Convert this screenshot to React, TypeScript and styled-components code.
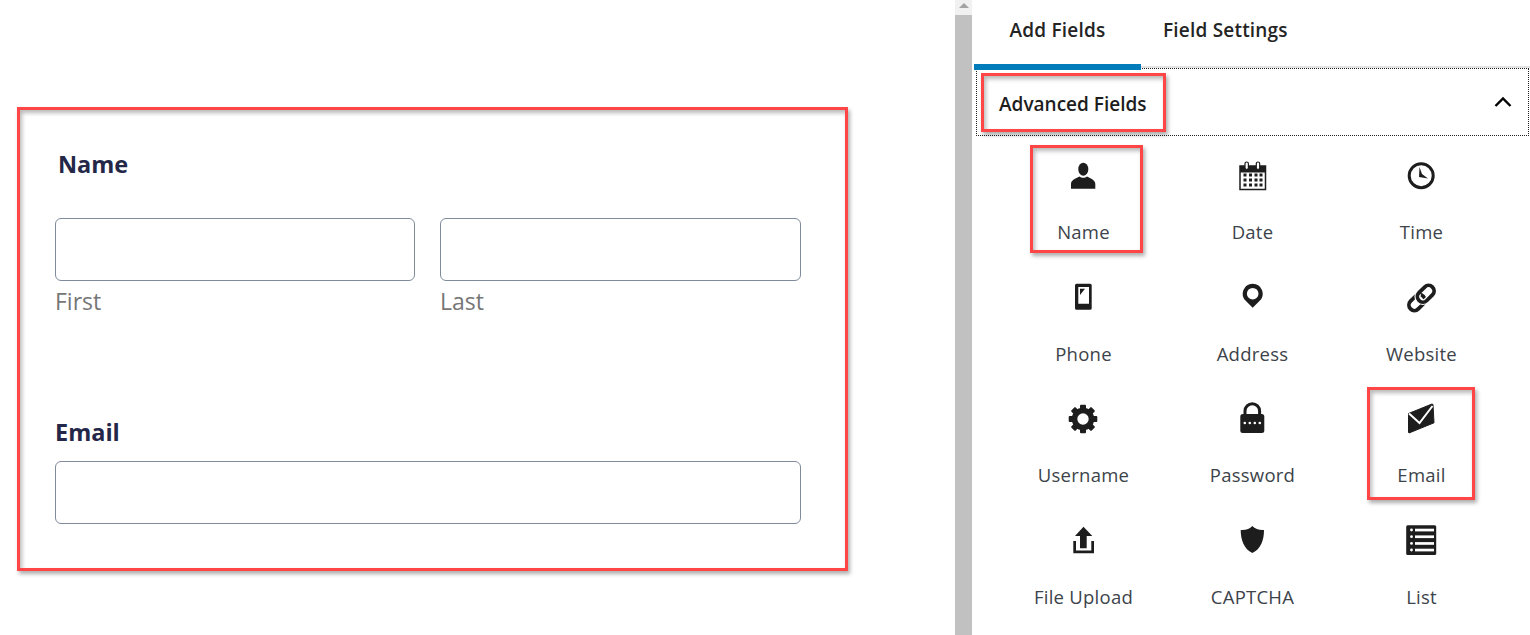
import React from "react";
import styled, { createGlobalStyle } from "styled-components";

const Global = createGlobalStyle`
  html, body { margin: 0; padding: 0; background: #fff; }
  body { font-family: "Open Sans", "Noto Sans", sans-serif; overflow: hidden; }
  * { box-sizing: border-box; }
`;

const Page = styled.div`
  display: flex;
  width: 1530px;
  height: 635px;
  overflow: hidden;
`;

const Canvas = styled.main`
  width: 955px;
  flex: none;
  padding: 107px 0 0 17px;
`;

const annotated = `
  border: 3px solid #ff4545;
  box-shadow: 2px 3px 4px rgba(0, 0, 0, 0.32), inset 2px 3px 4px rgba(0, 0, 0, 0.28);
`;

const FormCard = styled.section`
  ${annotated}
  width: 831px;
  height: 464px;
  padding: 38px 44px 0 35px;
`;

const FieldLabel = styled.div<{ $indent?: number; $gap: number }>`
  font-size: 23.5px;
  line-height: 32px;
  font-weight: 700;
  color: #242748;
  padding-left: ${(p) => p.$indent ?? 0}px;
  margin-bottom: ${(p) => p.$gap}px;
`;

const NameRow = styled.div`
  display: grid;
  grid-template-columns: 360px 361px;
  column-gap: 25px;
  margin-bottom: 99px;
`;

const TextInput = styled.input`
  display: block;
  width: 100%;
  height: 63px;
  border: 1px solid #7f8b9a;
  border-radius: 6px;
  background: #fff;
  outline: none;
`;

const SubLabel = styled.div`
  margin-top: 5px;
  margin-bottom: 1px;
  font-size: 23px;
  line-height: 30px;
  color: #767676;
`;

const Scrollbar = styled.div`
  width: 17px;
  flex: none;
  display: flex;
  flex-direction: column;
  background: #c1c1c1;
`;

const ScrollButton = styled.div`
  height: 15px;
  background: #f1f1f1;
  display: flex;
  align-items: flex-start;
  justify-content: center;
  padding-top: 3px;
  &::before {
    content: "";
    border-left: 5px solid transparent;
    border-right: 5px solid transparent;
    border-bottom: 5px solid #a3a3a3;
  }
`;

const Panel = styled.aside`
  flex: 1;
  min-width: 0;
  padding-left: 2px;
`;

const TabBar = styled.div`
  display: flex;
  height: 68px;
  border-bottom: 2px solid #e4e4e4;
`;

const Tab = styled.div<{ $active?: boolean }>`
  position: relative;
  z-index: 1;
  height: 70px;
  padding: 15px 0 0;
  font-size: 19px;
  line-height: 30px;
  font-weight: 600;
  color: #242424;
  text-align: center;
  letter-spacing: 0.2px;
  width: ${(p) => (p.$active ? "167px" : "auto")};
  margin-left: ${(p) => (p.$active ? "0" : "22px")};
  border-bottom: ${(p) => (p.$active ? "6px solid #007cba" : "none")};
`;

const Section = styled.section`
  margin: 0 0 0 2px;
  width: 553px;
`;

const SectionHeader = styled.header`
  height: 68px;
  border: 1px dotted #222;
  padding: 0 16px 0 22px;
  display: flex;
  align-items: center;
  justify-content: space-between;
`;

const SectionTitle = styled.h2`
  position: relative;
  margin: 4px 0 0;
  font-size: 19px;
  line-height: 26px;
  font-weight: 600;
  color: #1d1d1d;
`;

const Highlight = styled.div<{ $l: number; $t: number; $w: number; $h: number }>`
  ${annotated}
  position: absolute;
  left: ${(p) => p.$l}px;
  top: ${(p) => p.$t}px;
  width: ${(p) => p.$w}px;
  height: ${(p) => p.$h}px;
  pointer-events: none;
`;

const FieldGrid = styled.div`
  display: grid;
  grid-template-columns: repeat(3, 169px);
  grid-auto-rows: 84px;
  row-gap: 37.67px;
  padding: 24px 0 0 22.5px;
`;

const FieldCell = styled.div`
  position: relative;
  display: flex;
  flex-direction: column;
  align-items: center;
`;

const IconSlot = styled.svg`
  display: block;
  width: 32px;
  height: 32px;
  margin-bottom: 28px;
  overflow: visible;
  color: #1d1d1d;
`;

const CellLabel = styled.span`
  font-size: 18.5px;
  line-height: 24px;
  letter-spacing: 0.25px;
  margin-left: 1px;
  color: #3c434a;
  white-space: nowrap;
`;

const Person = () => (
  <g fill="currentColor">
    <ellipse cx="16.300" cy="9.200" rx="5" ry="6.500" />
    <path d="M4 28.700V24c0-4 4.500-5.500 8.500-7.500 2 1.700 5.500 1.700 7.500 0 4 2 8.300 3.500 8.300 7.500v4.700z" />
  </g>
);

const Calendar = () => (
  <g>
    <rect x="4" y="6" width="25.500" height="23.500" fill="#fff" stroke="currentColor" strokeWidth="1.500" />
    <rect x="4" y="6" width="25.500" height="6.500" fill="currentColor" />
    <rect x="9" y="2" width="3.400" height="7.500" rx="1.700" fill="#fff" stroke="currentColor" strokeWidth="1.200" />
    <rect x="20.300" y="2" width="3.400" height="7.500" rx="1.700" fill="#fff" stroke="currentColor" strokeWidth="1.200" />
    {[15, 20, 25].map((y) =>
      [9, 14.5, 20, 25].map((x) => (
        <rect key={`${x}-${y}`} x={x - 1.5} y={y - 1.5} width="3" height="3" fill="currentColor" />
      ))
    )}
  </g>
);

const Clock = () => (
  <g>
    <circle cx="16.200" cy="15.700" r="12" fill="none" stroke="currentColor" strokeWidth="3" />
    <path d="M14.500 7l2.500 7 6 4.500-9-1.500z" fill="currentColor" />
  </g>
);

const Phone = () => (
  <path
    fillRule="evenodd"
    fill="currentColor"
    d="M9.500 1.700h13.700a1.500 1.500 0 0 1 1.500 1.500v23a1.500 1.500 0 0 1-1.500 1.500H9.500A1.500 1.500 0 0 1 8 26.200v-23a1.500 1.500 0 0 1 1.500-1.500zM11.300 5v16.700H22V5zM13 6.700h5L13 13z"
  />
);

const Pin = () => (
  <path
    fillRule="evenodd"
    fill="currentColor"
    d="M16.700 1.700a10 10 0 0 1 6.500 17.600l-6.500 6.400-6.500-6.400a10 10 0 0 1 6.500-17.600zm0 4.200a5.800 5.800 0 1 0 0 11.600 5.800 5.800 0 0 0 0-11.600z"
  />
);

const LinkIcon = () => (
  <g transform="rotate(-45 16.500 16)" fill="none" strokeWidth="3.800">
    <rect x="1" y="10.500" width="18" height="11" rx="5.500" stroke="currentColor" />
    <rect x="13" y="10.500" width="19" height="11" rx="5.500" stroke="#fff" strokeWidth="6" strokeDasharray="0 14 40 100" />
    <rect x="13" y="10.500" width="19" height="11" rx="5.500" stroke="currentColor" />
  </g>
);

const Gear = () => (
  <g fill="currentColor">
    {[0, 45, 90, 135].map((a) => (
      <rect key={a} x="13" y="1.700" width="6" height="28.600" rx="1" transform={`rotate(${a} 16 16)`} />
    ))}
    <circle cx="16" cy="16" r="8.500" fill="none" stroke="currentColor" strokeWidth="5.500" />
    <circle cx="16" cy="16" r="5.700" fill="#fff" />
  </g>
);

const Lock = () => (
  <g>
    <path d="M9 13V8a7.300 7.300 0 0 1 14.600 0v5" fill="none" stroke="currentColor" strokeWidth="3" />
    <rect x="4.300" y="11" width="24" height="19" rx="2.500" fill="currentColor" />
    {[8.8, 13.8, 18.8, 23.8].map((x) => (
      <circle key={x} cx={x} cy="20" r="1.300" fill="#fff" />
    ))}
  </g>
);

const Envelope = () => (
  <g>
    <path d="M3.500 10.500L27 1a1 1 0 0 1 1 .8l1 18-25 10.200-.5-.5z" fill="currentColor" stroke="currentColor" strokeLinejoin="round" />
    <path d="M4 10.500l10.500 9.500L27.500 3" fill="none" stroke="#fff" strokeWidth="2" />
  </g>
);

const Upload = () => (
  <g fill="currentColor">
    <path d="M16.500 1.700L25.300 11H19.700v12.300H13V11H8z" />
    <path d="M6.300 16H9v9.500h15.300V16H27v12.300H6.300z" />
  </g>
);

const Shield = () => (
  <path
    fill="currentColor"
    d="M16.300 1C19 4 24 5.500 28 5c0 10-3 19-11.700 23C8 24 4.700 15 4.700 5 9 5.500 14 4 16.300 1z"
  />
);

const ListIcon = () => (
  <g>
    <rect x="1.200" y="0.300" width="30" height="29.700" rx="1.500" fill="currentColor" />
    {[4.3, 11, 17.7, 24.3].map((y) => (
      <g key={y} fill="#fff">
        <circle cx="6.500" cy={y + 0.7} r="1.400" />
        <rect x="10" y={y - 0.6} width="19" height="2.700" />
      </g>
    ))}
  </g>
);

const fields: { label: string; icon: React.ReactNode; mark?: { l: number; t: number; w: number; h: number } }[] = [
  { label: "Name", icon: <Person />, mark: { l: 31.5, t: -15, w: 113, h: 108 } },
  { label: "Date", icon: <Calendar /> },
  { label: "Time", icon: <Clock /> },
  { label: "Phone", icon: <Phone /> },
  { label: "Address", icon: <Pin /> },
  { label: "Website", icon: <LinkIcon /> },
  { label: "Username", icon: <Gear /> },
  { label: "Password", icon: <Lock /> },
  { label: "Email", icon: <Envelope />, mark: { l: 30.5, t: -16, w: 108, h: 113 } },
  { label: "File Upload", icon: <Upload /> },
  { label: "CAPTCHA", icon: <Shield /> },
  { label: "List", icon: <ListIcon /> },
];

export default function App() {
  return (
    <Page>
      <Global />
      <Canvas>
        <FormCard>
          <FieldLabel $indent={3} $gap={38}>Name</FieldLabel>
          <NameRow>
            <div>
              <TextInput aria-label="First" />
              <SubLabel>First</SubLabel>
            </div>
            <div>
              <TextInput aria-label="Last" />
              <SubLabel>Last</SubLabel>
            </div>
          </NameRow>
          <FieldLabel $gap={13}>Email</FieldLabel>
          <TextInput aria-label="Email" />
        </FormCard>
      </Canvas>
      <Scrollbar>
        <ScrollButton />
      </Scrollbar>
      <Panel>
        <TabBar>
          <Tab $active>Add Fields</Tab>
          <Tab>Field Settings</Tab>
        </TabBar>
        <Section>
          <SectionHeader>
            <SectionTitle>
              Advanced Fields
              <Highlight $l={-18} $t={-18} $w={185} $h={59} />
            </SectionTitle>
            <svg width="18" height="12" viewBox="0 0 18 12" fill="none" stroke="#000" strokeWidth="2.400">
              <path d="M1.500 10L9 2.500 16.500 10" />
            </svg>
          </SectionHeader>
          <FieldGrid>
            {fields.map((f) => (
              <FieldCell key={f.label}>
                <IconSlot viewBox="0 0 32 32">{f.icon}</IconSlot>
                <CellLabel>{f.label}</CellLabel>
                {f.mark && <Highlight $l={f.mark.l} $t={f.mark.t} $w={f.mark.w} $h={f.mark.h} />}
              </FieldCell>
            ))}
          </FieldGrid>
        </Section>
      </Panel>
    </Page>
  );
}
